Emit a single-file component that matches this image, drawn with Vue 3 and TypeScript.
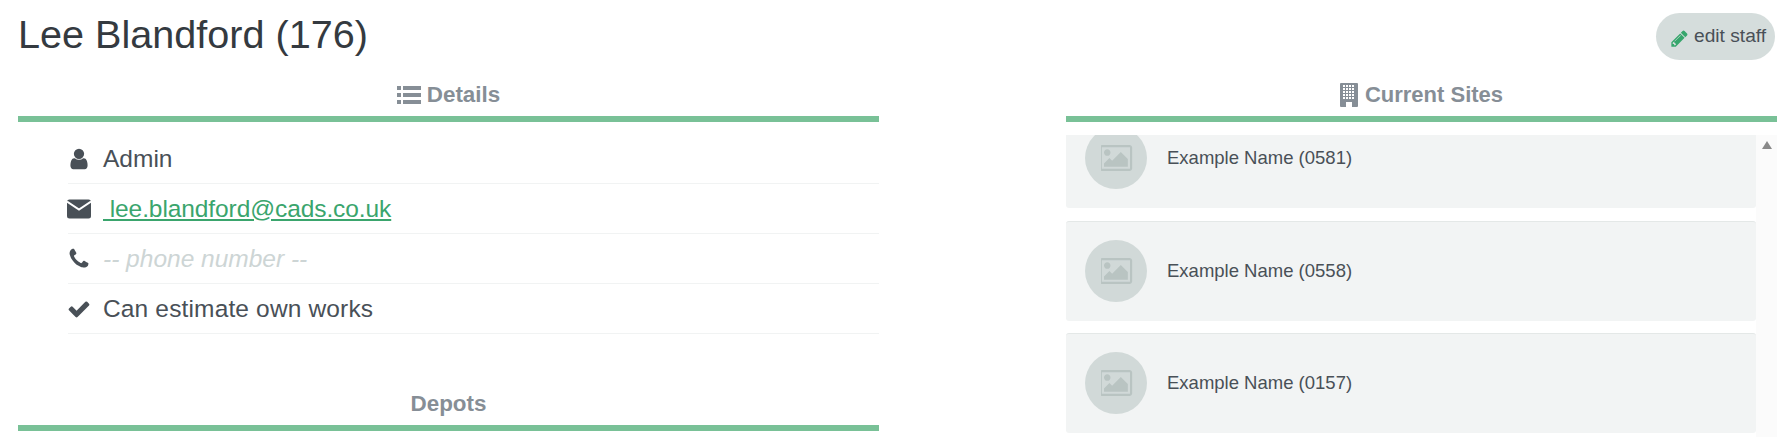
<script setup lang="ts">
import { onMounted, ref } from "vue";

const sites = ["Example Name (0581)", "Example Name (0558)", "Example Name (0157)"];
const windows = [0, 1, 2, 3, 4];
const picturePath =
  "M576 576q0 80-56 136t-136 56-136-56-56-136 56-136 136-56 136 56 56 136zm1024 384v448h-1408v-192l320-320 160 160 512-512zm96-704h-1600q-13 0-22.5 9.5t-9.5 22.5v1216q0 13 9.5 22.5t22.5 9.5h1600q13 0 22.5-9.5t9.5-22.5v-1216q0-13-9.5-22.5t-22.5-9.5zm160 32v1216q0 66-47 113t-113 47h-1600q-66 0-113-47t-47-113v-1216q0-66 47-113t113-47h1600q66 0 113 47t47 113z";

// the list in the reference is scrolled down a little
const list = ref<HTMLElement | null>(null);
onMounted(() => {
  if (list.value) list.value.scrollTop = 27;
});
</script>

<template>
  <div class="page">
    <header class="top">
      <h1>Lee Blandford (176)</h1>
      <button class="edit">
        <svg class="pencil" viewBox="0 0 1792 1792">
          <path d="M491 1536l91-91-235-235-91 91v107h128v128h107zm523-928q0-22-22-22-10 0-17 7l-542 542q-7 7-7 17 0 22 22 22 10 0 17-7l542-542q7-7 7-17zm-54-192l416 416-832 832h-416v-416zm683 96q0 53-37 90l-166 166-416-416 166-165q36-38 90-38 53 0 91 38l235 234q37 39 37 91z" />
        </svg>
        edit staff
      </button>
    </header>

    <div class="columns">
      <section class="left">
        <h2>
          <svg class="list-icon" viewBox="0 0 24 20">
            <rect x="0" y="1" width="4" height="4" />
            <rect x="0" y="8" width="4" height="4" />
            <rect x="0" y="15" width="4" height="4" />
            <rect x="6" y="1" width="18" height="4" />
            <rect x="6" y="8" width="18" height="4" />
            <rect x="6" y="15" width="18" height="4" />
          </svg>
          Details
        </h2>
        <ul class="details">
          <li>
            <svg class="icon" viewBox="0 0 1792 1792">
              <path d="M1536 1399q0 109-62.5 187t-150.5 78h-854q-88 0-150.5-78t-62.5-187q0-85 8.5-160.5t31.5-152 58.5-131 94-89 134.5-34.5q131 128 313 128t313-128q76 0 134.5 34.5t94 89 58.5 131 31.5 152 8.5 160.5zm-256-887q0 159-112.5 271.5t-271.5 112.5-271.5-112.5-112.5-271.5 112.5-271.5 271.5-112.5 271.5 112.5 112.5 271.5z" />
            </svg>
            <span>Admin</span>
          </li>
          <li>
            <svg class="icon" viewBox="0 0 24 24">
              <rect x="0" y="2.5" width="24" height="19" rx="2.5" />
              <path d="M0 4.5 L12 12.5 L24 4.5" fill="none" stroke="#fff" stroke-width="2" />
            </svg>
            <a href="#">&nbsp;lee.blandford@cads.co.uk</a>
          </li>
          <li>
            <svg class="icon" viewBox="0 0 1792 1792">
              <path d="M1600 1240q0 27-10 70.5t-21 68.5q-21 50-122 106-94 51-186 51-27 0-53-3.5t-57.5-12.5-47-14.5-55.5-20.5-49-18q-98-35-175-83-127-79-264-216t-216-264q-48-77-83-175-3-9-18-49t-20.5-55.5-14.5-47-12.5-57.5-3.5-53q0-92 51-186 56-101 106-122 25-11 68.5-21t70.5-10q14 0 21 3 18 6 53 76 11 19 30 54t35 63.5 31 53.5q3 4 17.5 25t21.5 35.5 7 28.5q0 20-28.5 50t-62 55-62 53-28.5 46q0 9 5 22.5t8.5 20.5 14 24 11.5 19q76 137 174 235t235 174q2 1 19 11.5t24 14 20.5 8.5 22.5 5q18 0 46-28.5t53-62 55-62 50-28.5q14 0 28.5 7t35.5 21.5 25 17.5q25 15 53.5 31t63.5 35 54 30q70 35 76 53 3 7 3 21z" />
            </svg>
            <span class="muted">-- phone number --</span>
          </li>
          <li>
            <svg class="icon" viewBox="0 0 1792 1792">
              <path d="M1671 566q0 40-28 68l-724 724-136 136q-28 28-68 28t-68-28l-136-136-362-362q-28-28-28-68t28-68l136-136q28-28 68-28t68 28l294 295 656-657q28-28 68-28t68 28l136 136q28 28 28 68z" />
            </svg>
            <span class="wide">Can estimate own works</span>
          </li>
        </ul>
        <h2 class="depots">Depots</h2>
      </section>

      <section class="right">
        <h2 class="sites-head">
          <svg class="building" viewBox="0 0 18 24">
            <rect width="18" height="24" rx="1" />
            <g fill="#fff">
              <template v-for="r in windows" :key="r">
                <rect v-for="c in [3, 6, 9, 12]" :key="c" :x="c" :y="2 + r * 3" width="2" height="2" />
              </template>
              <rect x="6" y="19" width="6" height="5" />
            </g>
          </svg>
          Current Sites
        </h2>
        <div class="sites">
          <div ref="list" class="site-list">
            <div v-for="site in sites" :key="site" class="site">
              <div class="thumb">
                <svg viewBox="32 128 1856 1536"><path :d="picturePath" /></svg>
              </div>
              <span>{{ site }}</span>
            </div>
          </div>
          <div class="track"><i class="arrow"></i></div>
        </div>
      </section>
    </div>
  </div>
</template>

<style scoped>
.page {
  padding: 0 13px 0 18px;
  font-family: "Liberation Sans", Arial, sans-serif;
  color: #495057;
}
.top {
  display: flex;
  justify-content: space-between;
  align-items: flex-start;
  height: 76px;
}
h1 {
  margin: 10px 0 0;
  font-size: 39.6px;
  line-height: 48px;
  font-weight: 400;
  color: #343a40;
}
.edit {
  display: flex;
  align-items: center;
  gap: 5px;
  height: 47px;
  width: 119px;
  margin: 13px 2px 0 0;
  padding: 0 0 2px 14px;
  border: 0;
  border-radius: 24px;
  background: #d5dddc;
  color: #495057;
  font: 400 19.2px "Liberation Sans", Arial, sans-serif;
}
.pencil {
  width: 19px;
  height: 19px;
  margin-top: 5px;
  fill: #36a66c;
}
.columns {
  display: flex;
  justify-content: space-between;
}
.left {
  width: 861px;
}
.right {
  width: 711px;
}
h2 {
  display: flex;
  justify-content: center;
  align-items: center;
  gap: 6px;
  height: 38px;
  margin: 0;
  padding-bottom: 2px;
  border-bottom: 6px solid #79c197;
  box-sizing: content-box;
  font-size: 22.4px;
  font-weight: 700;
  color: #868e96;
}
.sites-head {
  gap: 7px;
  font-size: 22px;
}
.list-icon {
  width: 24px;
  height: 20px;
  fill: #868e96;
}
.building {
  width: 18px;
  height: 24px;
  fill: #868e96;
}
.details {
  list-style: none;
  margin: 12px 0 0;
  padding: 0 0 0 50px;
}
.details li {
  display: flex;
  align-items: center;
  height: 50px;
  box-sizing: border-box;
  border-bottom: 1px solid #f1f3f3;
  font-size: 24.5px;
}
.icon {
  flex: none;
  width: 24px;
  height: 24px;
  margin-right: 12px;
  margin-left: -1px;
  fill: #495057;
}
.details a {
  color: #3aa56d;
  letter-spacing: -0.09px;
}
.muted {
  color: #cdd5d5;
  font-style: italic;
}
.wide {
  letter-spacing: 0.15px;
}
.depots {
  margin-top: 51px;
}
.sites {
  display: flex;
  height: 302px;
  margin-top: 13px;
}
.site-list {
  flex: 1;
  overflow: hidden;
}
.site {
  display: flex;
  align-items: center;
  gap: 20px;
  height: 100px;
  box-sizing: border-box;
  margin-bottom: 12px;
  padding: 0 0 2px 19px;
  border-radius: 3px;
  border-top: 1px solid #e4e8e7;
  background: #f2f4f4;
  font-size: 18.5px;
}
.site:first-child {
  margin-bottom: 13px;
}
.thumb {
  display: flex;
  align-items: center;
  justify-content: center;
  flex: none;
  width: 62px;
  height: 62px;
  border-radius: 50%;
  background: #d1d9d8;
}
.thumb svg {
  width: 32px;
  height: 26px;
  margin-left: 2px;
  fill: #b9c4c2;
}
.track {
  flex: none;
  width: 21px;
  background: #fbfbfb;
  display: flex;
  justify-content: center;
  padding-top: 6px;
  box-sizing: border-box;
}
.arrow {
  width: 0;
  height: 0;
  border-left: 5.5px solid transparent;
  border-right: 5.5px solid transparent;
  border-bottom: 8px solid #8a8a8a;
}
</style>

<style>
html,
body {
  overflow: hidden;
  background: #fff;
}
</style>
